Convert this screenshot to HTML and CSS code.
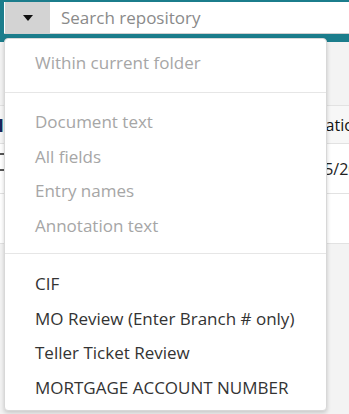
FILE: index.html
```html
<!DOCTYPE html>
<html>
<head>
<meta charset="utf-8">
<link rel="stylesheet" href="styles.css">
</head>
<body>
<div class="page">
  <div class="toolbar">
    <div class="search">
      <button class="search-btn"><span class="caret"></span></button>
      <div class="search-input">Search repository</div>
    </div>
  </div>
  <div class="content">
    <table class="grid">
      <tr class="head"><td class="c1"><span class="mark"></span></td><td class="c2"></td><td class="c3">Creation</td></tr>
      <tr><td class="c1"><span class="dash"></span><span class="dash"></span></td><td class="c2"></td><td class="c3">3/15/2019</td></tr>
      <tr><td class="c1"></td><td class="c2"></td><td class="c3"></td></tr>
    </table>
  </div>
  <div class="menu">
    <div class="group">
      <div class="item muted">Within current folder</div>
    </div>
    <div class="group">
      <div class="item muted">Document text</div>
      <div class="item muted">All fields</div>
      <div class="item muted">Entry names</div>
      <div class="item muted">Annotation text</div>
    </div>
    <div class="group">
      <div class="item">CIF</div>
      <div class="item">MO Review (Enter Branch # only)</div>
      <div class="item">Teller Ticket Review</div>
      <div class="item">MORTGAGE ACCOUNT NUMBER</div>
    </div>
  </div>
</div>
</body>
</html>
```
FILE: styles.css
```css
* { box-sizing: border-box; }
html, body { margin: 0; padding: 0; }
body {
  font-family: "Open Sans", "Noto Sans", sans-serif;
  background: #ffffff;
  width: 349px;
  height: 414px;
  overflow: hidden;
}
.page { position: relative; width: 349px; height: 414px; }
.toolbar {
  background: #1b7d8c;
  height: 42px;
  padding: 2px 0 0 4px;
}
.search {
  display: flex;
  height: 32px;
  background: #fff;
  border-bottom: 1px solid #d0d0d0;
}
.search-btn {
  width: 45px;
  height: 31px;
  border: 0;
  margin: 0 0 0 1px;
  padding: 0;
  background: #d3d3d3;
  display: flex;
  align-items: center;
  justify-content: center;
}
.caret {
  width: 0; height: 0;
  border-left: 5px solid transparent;
  border-right: 5px solid transparent;
  border-top: 6px solid #111;
  margin-top: 1px;
}
.search-input {
  flex: 1;
  padding-left: 10px;
  font-size: 17px;
  line-height: 31px;
  color: #8a8a8a;
  border-left: 1px solid #fff;
}
.content {
  background: #f3f3f3;
  height: 372px;
  padding-top: 63px;
}
.grid {
  border-collapse: collapse;
  width: 100%;
  font-size: 16px;
  background: #fff;
  table-layout: fixed;
}
.grid td {
  height: 50px;
  border-top: 1px solid #e2e2e2;
  border-bottom: 1px solid #e2e2e2;
  color: #222;
  padding: 0;
  white-space: nowrap;
  overflow: hidden;
}
.grid .head td { background: #f7f7f7; height: 38px; color: #111; }
.grid .c1 { width: 4px; }
.grid .c2 { width: 296px; }
.grid .c3 { padding-left: 0; }
.mark { display: block; width: 3px; height: 13px; background: #1c2460; border-right: 1px solid #5fb3c2; margin-top: 2px; }
.dash { display: block; width: 4px; height: 2px; background: #555; margin: 0 0 14px; }
.menu {
  position: absolute;
  left: 4px;
  top: 38px;
  width: 323px;
  height: 373px;
  background: #fff;
  border: 1px solid #d8d8d8;
  border-radius: 4px;
  box-shadow: 0 2px 4px rgba(0,0,0,0.18);
}
.group {
  padding: 12px 0 10px;
  border-top: 1px solid #e6e6e6;
}
.group:first-child { border-top: 0; padding: 7px 0 11.5px; }
.group:last-child { padding: 13px 0 5px; }
.item {
  padding-left: 30px;
  font-size: 17px;
  line-height: 34.5px;
  color: #333;
  white-space: nowrap;
}
.item.muted { color: #a6a6a6; }
```
